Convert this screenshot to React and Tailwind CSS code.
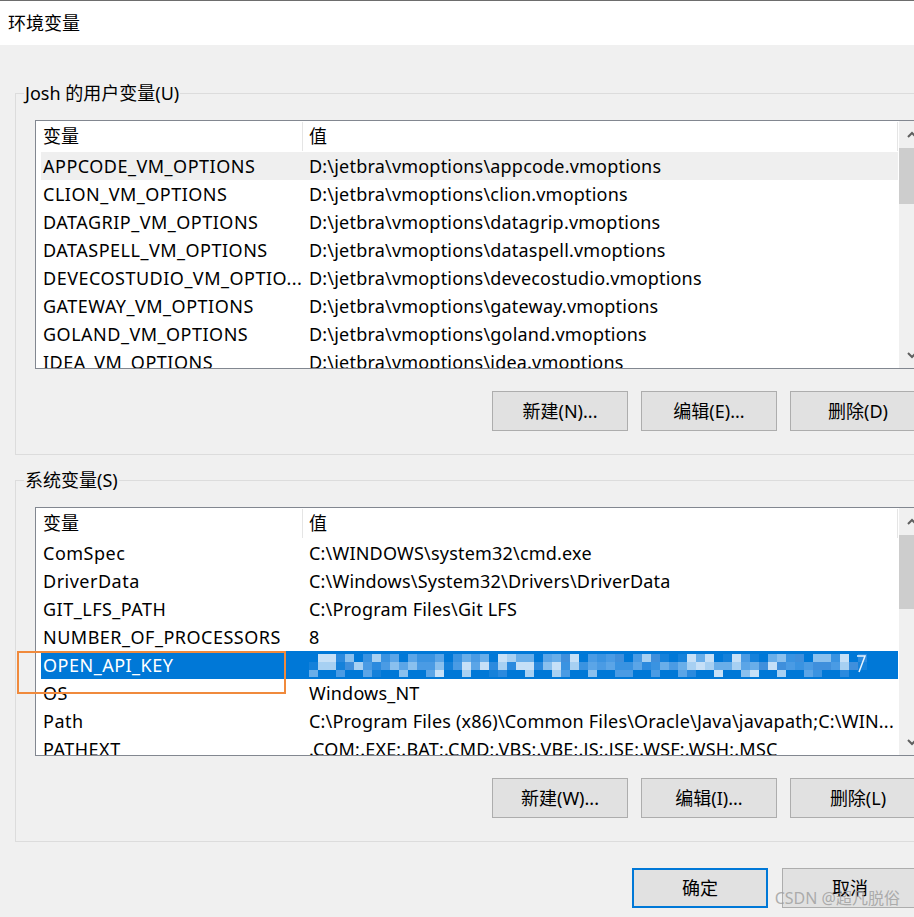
import React from 'react';

const userVars = [
    ['APPCODE_VM_OPTIONS', 'D:\\jetbra\\vmoptions\\appcode.vmoptions'],
    ['CLION_VM_OPTIONS', 'D:\\jetbra\\vmoptions\\clion.vmoptions'],
    ['DATAGRIP_VM_OPTIONS', 'D:\\jetbra\\vmoptions\\datagrip.vmoptions'],
    ['DATASPELL_VM_OPTIONS', 'D:\\jetbra\\vmoptions\\dataspell.vmoptions'],
    ['DEVECOSTUDIO_VM_OPTIO...', 'D:\\jetbra\\vmoptions\\devecostudio.vmoptions'],
    ['GATEWAY_VM_OPTIONS', 'D:\\jetbra\\vmoptions\\gateway.vmoptions'],
    ['GOLAND_VM_OPTIONS', 'D:\\jetbra\\vmoptions\\goland.vmoptions'],
    ['IDEA_VM_OPTIONS', 'D:\\jetbra\\vmoptions\\idea.vmoptions'],
];

const sysVars = [
    ['ComSpec', 'C:\\WINDOWS\\system32\\cmd.exe'],
    ['DriverData', 'C:\\Windows\\System32\\Drivers\\DriverData'],
    ['GIT_LFS_PATH', 'C:\\Program Files\\Git LFS'],
    ['NUMBER_OF_PROCESSORS', '8'],
    ['OPEN_API_KEY', null],
    ['OS', 'Windows_NT'],
    ['Path', 'C:\\Program Files (x86)\\Common Files\\Oracle\\Java\\javapath;C:\\WIN...'],
    ['PATHEXT', '.COM;.EXE;.BAT;.CMD;.VBS;.VBE;.JS;.JSE;.WSF;.WSH;.MSC'],
];

// 打码的那一段，用色块拼出来
const Mosaic = () => {
    const shades = ['#2b8ade', '#4a9be4', '#69aee9', '#8ac0ee', '#a7d0f2', '#3a93e1', '#1581da', '#5ba5e7', '#c6e0f7', '#3f8fdc'];
    const blocks = [];
    for (let i = 0; i < 62; i++) {
        for (let j = 0; j < 3; j++) {
            const k = (i * 7 + j * 5 + ((i * i + j) % 11)) % shades.length;
            if (j === 2 && (i * 5) % 7 > 2) continue;
            if (j === 0 && (i * 3) % 5 === 0) continue;
            blocks.push(
                <rect key={`${i}-${j}`} x={i * 9} y={1 + j * 8} width="9" height="8" fill={shades[k]} />
            );
        }
    }
    return (
        <svg width="560" height="24" viewBox="0 0 560 24" className="block">
            {blocks}
            <path d="M548 3 L556 3 L550 19" stroke="#e8f3fd" strokeWidth="1.5" fill="none" />
        </svg>
    );
};

const Chevron = ({ up }) => (
    <svg width="10" height="7" viewBox="0 0 10 7">
        <path d={up ? 'M1 6 L5 2 L9 6' : 'M1 1 L5 5 L9 1'} stroke="#606060" strokeWidth="2" fill="none" />
    </svg>
);

const ScrollBar = ({ thumbTop, thumbHeight }) => (
    <div className="w-[26px] h-full bg-[#f0f0f0] flex flex-col">
        <div className="h-[26px] flex items-center justify-center"><Chevron up /></div>
        <div className="flex-1 flex flex-col">
            <div style={{ height: thumbTop }} />
            <div className="bg-[#cdcdcd] w-full" style={{ height: thumbHeight }} />
        </div>
        <div className="h-[26px] flex items-center justify-center"><Chevron /></div>
    </div>
);

const VarList = ({ rows, hoverIndex, selectedIndex, thumbTop, thumbHeight }) => (
    <div className="w-[891px] h-[249px] border border-[#828790] bg-white flex">
        <div className="w-[863px] h-full overflow-hidden">
            <div className="h-[31px] ml-[5px] flex items-center">
                <div className="w-[262px] h-[29px] pl-[2px] flex items-center border-r border-[#e5e5e5]">变量</div>
                <div className="w-[595px] h-[29px] pl-[6px] flex items-center border-r border-[#e5e5e5]">值</div>
            </div>
            {rows.map(([name, value], i) => {
                const selected = i === selectedIndex;
                const hover = i === hoverIndex;
                return (
                    <div key={name}
                        className={`h-[28px] ml-[5px] w-[857px] flex items-center whitespace-nowrap ${selected ? 'bg-[#0078d7] text-white' : hover ? 'bg-[#efefef]' : ''}`}>
                        <div className="w-[262px] shrink-0 pl-[2px] overflow-hidden tracking-[0.5px]">{name}</div>
                        <div className="flex-1 min-w-0 pl-[6px] overflow-hidden tracking-[0.2px]">{value === null ? <Mosaic /> : value}</div>
                    </div>
                );
            })}
        </div>
        <ScrollBar thumbTop={thumbTop} thumbHeight={thumbHeight} />
    </div>
);

const WinButton = ({ children, primary }) => (
    <button className={`w-[136px] h-[40px] bg-[#e1e1e1] flex items-center justify-center shrink-0 ${primary ? 'border-2 border-[#0078d7]' : 'border border-[#adadad]'}`}>
        {children}
    </button>
);

const GroupBox = ({ title, children, className }) => (
    <fieldset className={`w-[960px] border border-[#dcdcdc] px-[8px] pb-[23px] ${className}`}>
        <legend className="px-[1px] leading-[24px]">{title}</legend>
        <div className="pl-[11px] pt-[15px]">{children}</div>
    </fieldset>
);

export default function App() {
    return (
        <div className="w-[914px] h-[917px] overflow-hidden relative bg-[#f0f0f0] text-[18px] text-black font-['Noto_Sans','Noto_Sans_CJK_SC',sans-serif]">
            <div className="h-[45px] bg-white border-t border-[#6d6d6d] flex items-center pl-[8px]">环境变量</div>

            <div className="pl-[15px]">
                <GroupBox title="Josh 的用户变量(U)" className="mt-[36px]">
                    <VarList rows={userVars} hoverIndex={0} thumbTop={1} thumbHeight={56} />
                    <div className="w-[891px] mt-[22px] flex justify-end gap-[13px]">
                        <WinButton>新建(N)...</WinButton>
                        <WinButton>编辑(E)...</WinButton>
                        <WinButton>删除(D)</WinButton>
                    </div>
                </GroupBox>

                <GroupBox title="系统变量(S)" className="mt-[13px]">
                    <VarList rows={sysVars} selectedIndex={4} thumbTop={1} thumbHeight={74} />
                    <div className="w-[891px] mt-[22px] flex justify-end gap-[13px]">
                        <WinButton>新建(W)...</WinButton>
                        <WinButton>编辑(I)...</WinButton>
                        <WinButton>删除(L)</WinButton>
                    </div>
                </GroupBox>
            </div>

            <div className="mt-[26px] pl-[632px] flex gap-[14px]">
                <WinButton primary>确定</WinButton>
                <WinButton>取消</WinButton>
            </div>

            {/* 标注框和水印 */}
            <div className="absolute left-[17px] top-[651px] w-[269px] h-[43px] border-2 border-[#f08a3c]" />
            <div className="absolute right-[14px] bottom-[7px] text-[16px] text-[#9c9c9c]/80">CSDN @超凡脱俗</div>
        </div>
    );
}
